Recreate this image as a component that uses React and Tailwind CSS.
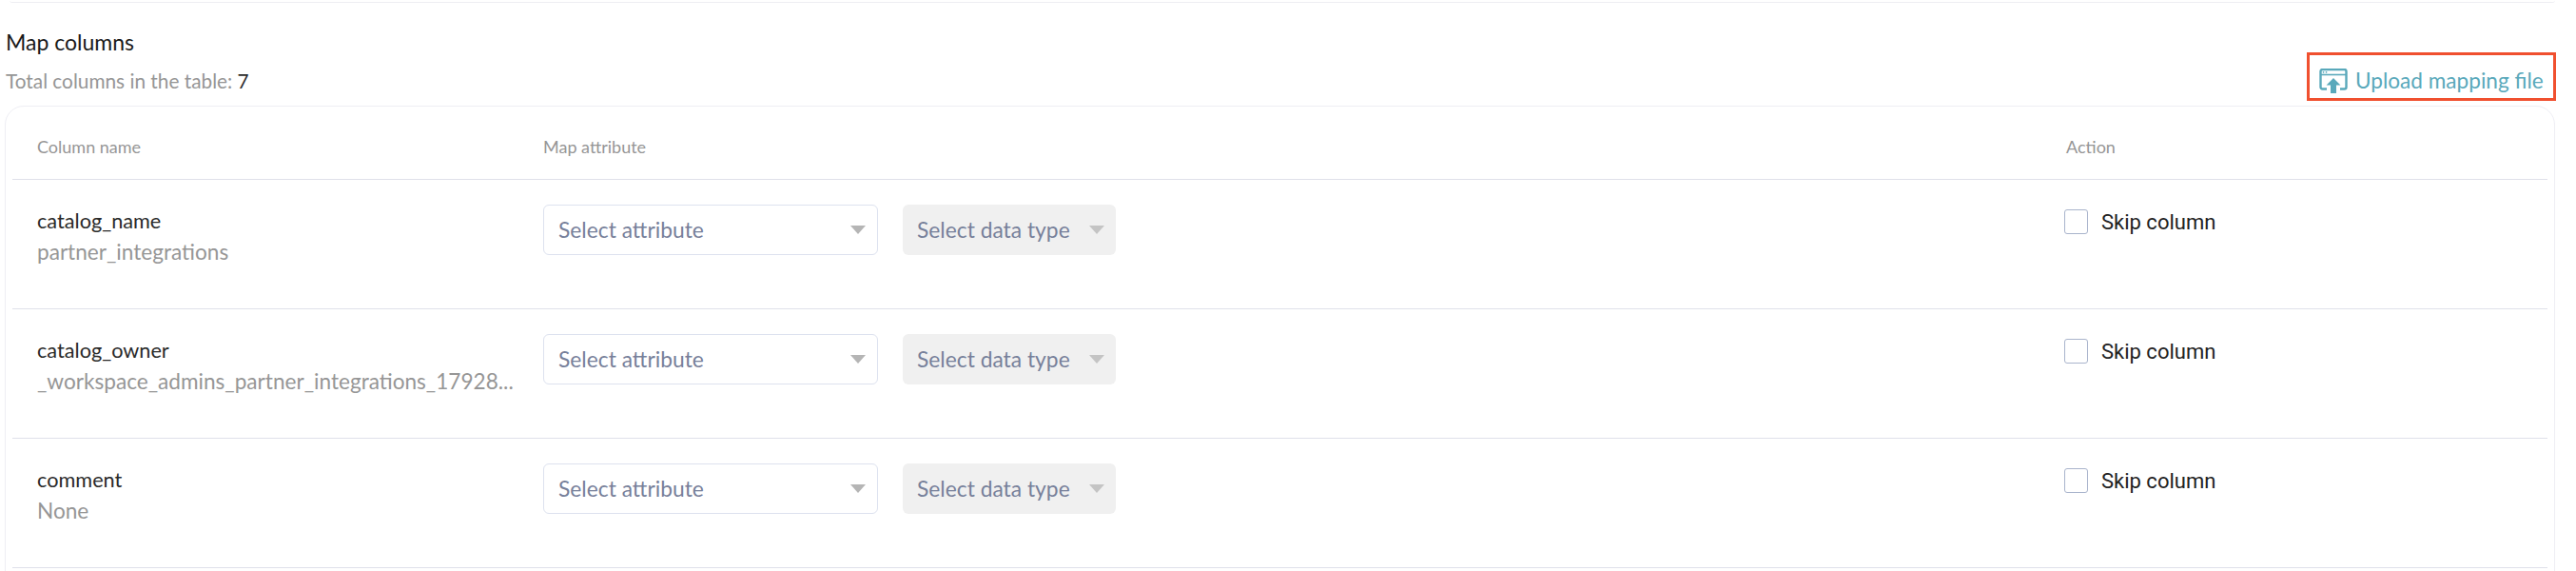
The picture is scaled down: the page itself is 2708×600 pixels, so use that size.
import React from "react";

const rows = [
  { name: "catalog_name", sample: "partner_integrations" },
  { name: "catalog_owner", sample: "_workspace_admins_partner_integrations_17928..." },
  { name: "comment", sample: "None" },
];

function UploadIcon() {
  return (
    <svg width="30" height="26" viewBox="0 0 30 26" fill="none" className="shrink-0">
      <path d="M8 21.5H3.5a2 2 0 0 1-2-2V3a2 2 0 0 1 2-2h23a2 2 0 0 1 2 2v16.5a2 2 0 0 1-2 2H22" stroke="#5aa9bb" strokeWidth="2.4" />
      <path d="M1.5 6.500h27" stroke="#5aa9bb" strokeWidth="1.6" />
      <circle cx="4.500" cy="3.800" r="0.9" fill="#5aa9bb" />
      <circle cx="7.500" cy="3.800" r="0.9" fill="#5aa9bb" />
      <path d="M15 10l7.500 7.500H18V26h-6v-8.500H7.500z" fill="#5aa9bb" />
    </svg>
  );
}

function Caret({ color }) {
  return <span className={`w-0 h-0 border-x-[8px] border-x-transparent border-t-[9px] ${color}`} />;
}

function Row({ name, sample }) {
  return (
    <div className="grid grid-cols-[558px_1599px_1fr] h-[136px] border-b border-[#dfe1ea]">
      <div className="pl-[26px] pt-[29px]">
        <div className="text-[21.7px] leading-[28px] text-[#2a2a2a]">{name}</div>
        <div className="mt-[5px] text-[22.6px] leading-[28px] text-[#969696] whitespace-nowrap">{sample}</div>
      </div>
      <div className="flex gap-[26px] pt-[26px]">
        <div className="flex items-center justify-between w-[352px] h-[53px] pl-[15px] pr-[12px] border border-[#dde2ef] rounded-[6px] text-[22.800px] text-[#77809a]">
          <span>Select attribute</span>
          <Caret color="border-t-[#b5b5b5]" />
        </div>
        <div className="flex items-center justify-between w-[224px] h-[53px] pl-[15px] pr-[12px] bg-[#f0f0f0] rounded-[6px] text-[22.800px] text-[#77809a]">
          <span className="whitespace-nowrap">Select data type</span>
          <Caret color="border-t-[#c4c4c4]" />
        </div>
      </div>
      <div className="flex items-start gap-[14px] pt-[31px]">
        <span className="w-[25px] h-[26px] border border-[#a9b4cc] rounded-[3px] bg-white" />
        <span className="text-[22px] leading-[28px] font-['Roboto',sans-serif] text-[#222]">Skip column</span>
      </div>
    </div>
  );
}

export default function App() {
  return (
    <div className="h-[600px] overflow-hidden bg-white pl-[5px] pr-[21px] font-['Lato',sans-serif]">
      <div className="h-[3px] ml-[5px] mr-px border-b border-[#eeeef2] rounded-b-[6px]" />

      <div className="flex justify-between h-[108px]">
        <div className="pl-px">
          <div className="mt-[27px] text-[23px] leading-[28px] text-[#1a1a1a]">Map columns</div>
          <div className="mt-[13px] text-[20.800px] leading-[28px] text-[#969696]">
            Total columns in the table: <span className="text-[#2b2b2b]">7</span>
          </div>
        </div>
        <div className="self-start mt-[52px] flex items-center gap-[8px] w-[262px] h-[51px] pl-[10px] pt-[9px] border-[3px] border-[#f0502f] text-[22.600px] text-[#5aa9bb]">
          <UploadIcon />
          <span className="whitespace-nowrap">Upload mapping file</span>
        </div>
      </div>

      <div className="relative z-10 h-[620px] mr-px border border-[#eeeef4] rounded-[20px] px-[7px]">
        <div className="grid grid-cols-[558px_1599px_1fr] h-[77px] items-center pt-[9px] border-b border-[#dfe1ea] text-[18px] text-[#969696]">
          <div className="pl-[26px]">Column name</div>
          <div>Map attribute</div>
          <div className="pl-[2px]">Action</div>
        </div>
        {rows.map((r) => (
          <Row key={r.name} name={r.name} sample={r.sample} />
        ))}
      </div>
    </div>
  );
}
